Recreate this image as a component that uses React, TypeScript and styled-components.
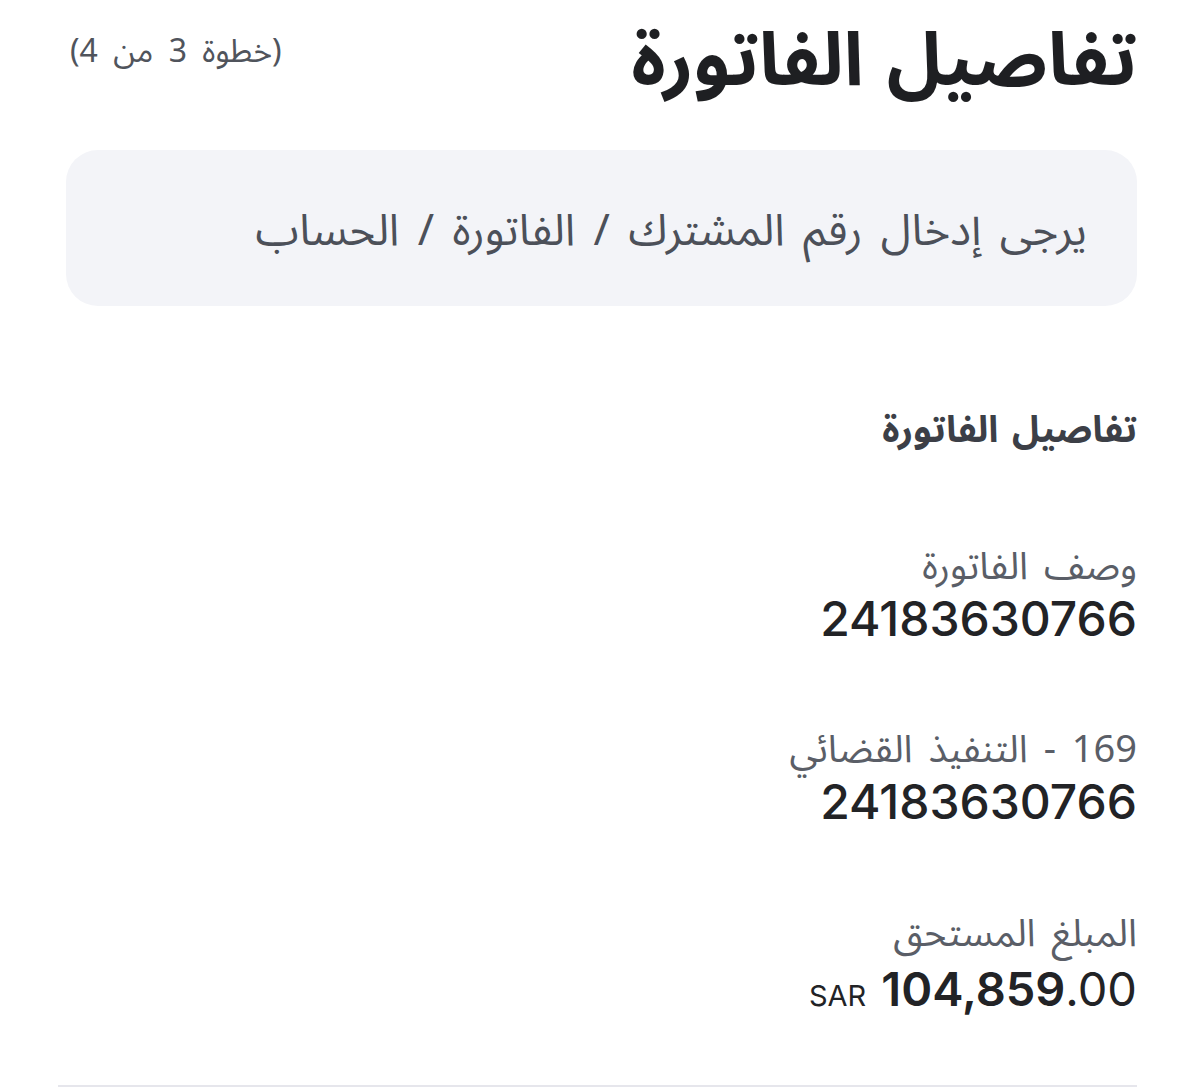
import React from "react";
import styled, { createGlobalStyle } from "styled-components";

const GlobalStyle = createGlobalStyle`
  html, body { margin: 0; padding: 0; background: #ffffff; }
  body { font-family: "Noto Sans Arabic", "Noto Sans", "DejaVu Sans", sans-serif; }
`;

const Page = styled.div`
  direction: rtl;
  width: 1200px;
  height: 1090px;
  box-sizing: border-box;
  padding: 0 63px 0 66px;
  display: flex;
  flex-direction: column;
  overflow: hidden;
`;

const Header = styled.header`
  display: flex;
  align-items: flex-start;
  justify-content: space-between;
  margin-top: 8px;
`;

const Title = styled.h1`
  margin: 0;
  font-size: 74px;
  font-weight: 700;
  color: #1e1f22;
  line-height: 108px;
  word-spacing: 4px;
`;

const Step = styled.span`
  font-size: 32px;
  line-height: 44px;
  color: #50545c;
  margin-top: 22px;
  margin-left: 4px;
  word-spacing: 7px;
`;

const Notice = styled.div`
  margin-top: 34px;
  height: 156px;
  box-sizing: border-box;
  background: #f3f4f8;
  border-radius: 32px;
  display: flex;
  align-items: center;
  padding: 6px 50px 0;
  font-size: 44px;
  line-height: 60px;
  word-spacing: 7px;
  color: #4c5059;
`;

const SectionTitle = styled.h2`
  margin: 100px 0 0;
  font-size: 37px;
  font-weight: 700;
  color: #3c3f47;
  line-height: 48px;
  word-spacing: 4px;
`;

const Field = styled.div<{ $gap: number }>`
  margin-top: ${(p) => p.$gap}px;
  display: flex;
  flex-direction: column;
`;

const Label = styled.span`
  font-size: 38px;
  color: #5a5e67;
  line-height: 44px;
  word-spacing: 6px;
`;

const Value = styled.span`
  font-family: "Inter", "Liberation Sans", sans-serif;
  font-size: 48px;
  font-weight: 500;
  color: #222326;
  line-height: 56px;
  margin-top: 2px;
`;

const Amount = styled.div`
  display: flex;
  align-items: baseline;
  gap: 15px;
  font-family: "Inter", "Liberation Sans", sans-serif;
  color: #222326;
  direction: ltr;
  justify-content: flex-end;
  line-height: 56px;
  margin-top: 5px;
`;

const Currency = styled.span`
  font-size: 29px;
  font-weight: 400;
`;

const Whole = styled.span`
  font-size: 47px;
  font-weight: 600;
`;

const Cents = styled.span`
  font-size: 47px;
  font-weight: 400;
`;

const Divider = styled.hr`
  margin: auto 0 3px -8px;
  border: none;
  height: 2px;
  background: #e6e6ec;
`;

export default function App() {
  return (
    <>
      <GlobalStyle />
      <Page>
        <Header>
          <Title>تفاصيل الفاتورة</Title>
          <Step>(خطوة 3 من 4)</Step>
        </Header>
        <Notice>يرجى إدخال رقم المشترك / الفاتورة / الحساب</Notice>
        <SectionTitle>تفاصيل الفاتورة</SectionTitle>
        <Field $gap={91}>
          <Label>وصف الفاتورة</Label>
          <Value>24183630766</Value>
        </Field>
        <Field $gap={81}>
          <Label>169 - التنفيذ القضائي</Label>
          <Value>24183630766</Value>
        </Field>
        <Field $gap={82}>
          <Label>المبلغ المستحق</Label>
          <Amount>
            <Currency>SAR</Currency>
            <span>
              <Whole>104,859</Whole>
              <Cents>.00</Cents>
            </span>
          </Amount>
        </Field>
        <Divider />
      </Page>
    </>
  );
}
